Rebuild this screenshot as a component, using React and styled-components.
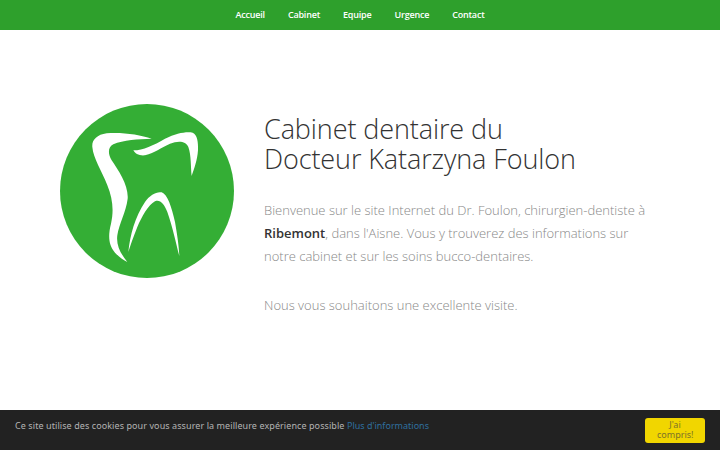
import React from "react";
import styled, { createGlobalStyle } from "styled-components";

const Global = createGlobalStyle`
  html, body { margin: 0; padding: 0; background: #fff; }
  body { font-family: "Open Sans", sans-serif; }
`;
const Page = styled.div`
  width: 720px; height: 450px; display: flex; flex-direction: column; overflow: hidden;
`;
const Nav = styled.nav`
  height: 30px; background: #2ea02c; display: flex; justify-content: center; align-items: center; gap: 23px;
  flex: none;
`;
const NavLink = styled.a`
  color: #fff; font-size: 9px; font-weight: 600; line-height: 30px; letter-spacing: -0.2px; text-decoration: none;
`;
const Main = styled.main`
  flex: 1; display: flex; align-items: flex-start; padding: 74px 0 0 60px; gap: 30px;
`;
const Logo = styled.svg`
  width: 174px; height: 174px; flex: none; display: block;
`;
const Content = styled.div`
  width: 390px; padding-top: 10px;
`;
const Title = styled.h1`
  margin: 0 0 25px; font-size: 27px; line-height: 30px; font-weight: 300; color: #333; letter-spacing: -0.1px;
`;
const Text = styled.p`
  margin: 0 0 26px; font-size: 13px; line-height: 23px; font-weight: 300; color: #888;
  strong { font-weight: 600; color: #333; }
`;
const Cookie = styled.div`
  height: 40px; background: #222; display: flex; align-items: flex-start; justify-content: space-between;
  padding: 0 15px; flex: none; box-sizing: border-box;
`;
const CookieText = styled.p`
  margin: 0; padding-top: 9px; font-family: "Noto Sans", sans-serif; font-size: 9px; line-height: 14px; letter-spacing: 0.08px; color: #b4b4b4;
  a { color: #2f6f9f; text-decoration: none; letter-spacing: 0; }
`;
const Accept = styled.button`
  width: 60px; height: 25px; margin-top: 8px; padding: 0 12px 2px; border: 0; border-radius: 3px; background: #f1d600;
  font-family: "Noto Sans", sans-serif; font-size: 9px; line-height: 10px; color: #7c7328; text-align: center;
`;

const items = ["Accueil", "Cabinet", "Equipe", "Urgence", "Contact"];

export default function App() {
  return (
    <Page>
      <Global />
      <Nav>
        {items.map((t) => <NavLink key={t} href="#">{t}</NavLink>)}
      </Nav>
      <Main>
        <Logo viewBox="30 26 522 522">
          <circle cx="291" cy="287" r="261" fill="#34ae35" />
          <path fill="#fff" d="M305 130 C270 118 215 110 170 114 C140 118 125 135 127 155 C130 190 155 225 172 270 C188 310 192 345 183 385 C174 420 175 450 195 472 C207 485 220 494 232 500 C212 475 198 450 202 420 C207 385 228 350 233 310 C236 270 205 225 185 195 C172 172 175 155 190 147 C220 133 265 132 305 130 Z" />
          <path fill="#fff" d="M250 165 C280 165 310 150 345 130 C380 113 410 108 428 112 C442 118 445 140 444 165 C442 195 432 222 425 242 C422 215 424 180 415 155 C408 137 385 135 360 145 C335 156 315 172 285 180 C268 182 255 175 250 165 Z" />
          <path fill="#fff" d="M235 470 C240 420 255 365 285 320 C300 298 320 288 335 291 C352 296 365 335 375 380 C382 420 387 455 388 482 C378 445 368 395 352 350 C342 325 330 312 315 318 C295 328 275 365 262 395 C250 425 241 450 235 470 Z" />
        </Logo>
        <Content>
          <Title>Cabinet dentaire du<br />Docteur Katarzyna Foulon</Title>
          <Text>
            Bienvenue sur le site Internet du Dr. Foulon, chirurgien-dentiste à <strong>Ribemont</strong>, dans l'Aisne. Vous y trouverez des informations sur notre cabinet et sur les soins bucco-dentaires.
          </Text>
          <Text>Nous vous souhaitons une excellente visite.</Text>
        </Content>
      </Main>
      <Cookie>
        <CookieText>Ce site utilise des cookies pour vous assurer la meilleure expérience possible <a href="#">Plus d'informations</a></CookieText>
        <Accept>J'ai compris!</Accept>
      </Cookie>
    </Page>
  );
}
